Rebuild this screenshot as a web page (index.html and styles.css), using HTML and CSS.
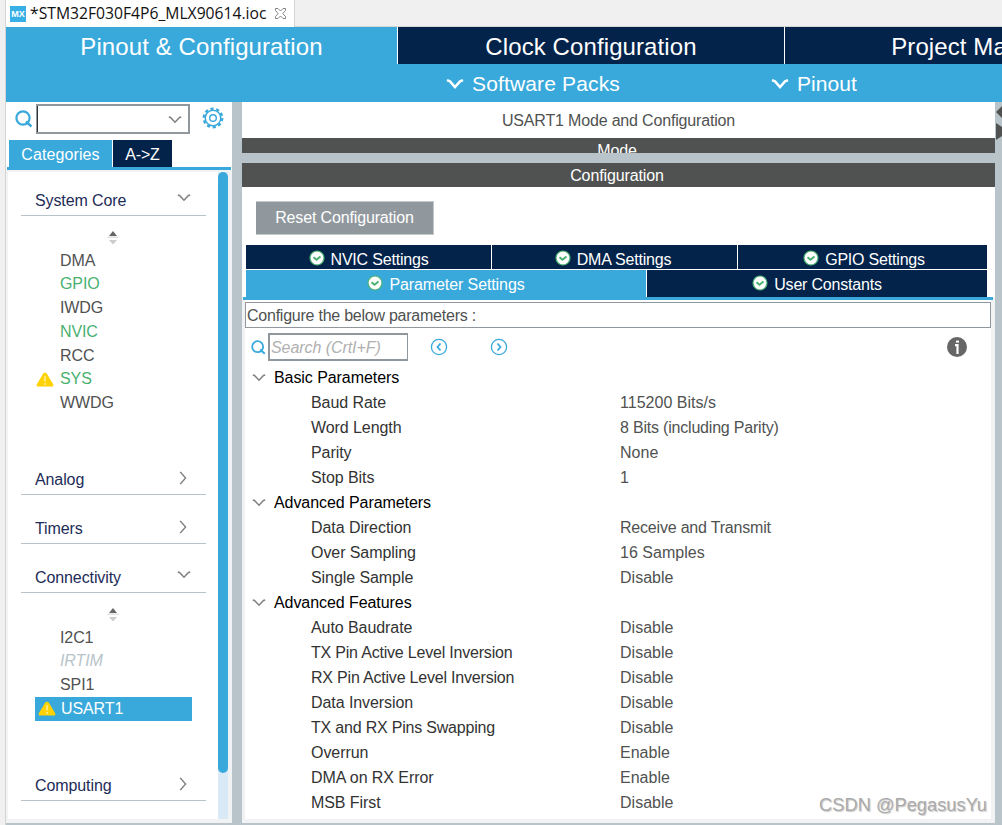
FILE: index.html
```html
<!DOCTYPE html>
<html lang="en">
<head>
    <meta charset="UTF-8">
    <meta name="viewport" content="width=device-width, initial-scale=1.0">
    <title>STM32F030F4P6_MLX90614.ioc</title>
    <link rel="stylesheet" href="styles.css">
</head>
<body>
    <svg class="defs" width="0" height="0">
        <symbol id="down" viewBox="0 0 14 8"><path d="M0.8 1 L2.5 1.5 L7 6.2 L11.5 1.5 L13.2 1" fill="none" stroke="currentColor" stroke-width="1.5"/></symbol>
        <symbol id="right" viewBox="0 0 8 14"><path d="M1 1 L2 1.8 L6.6 7 L2 12.2 L1 13" fill="none" stroke="currentColor" stroke-width="1.4"/></symbol>
        <symbol id="lens" viewBox="0 0 18 18"><circle cx="8" cy="8" r="6.6" fill="none" stroke="currentColor" stroke-width="2.2"/><path d="M11 11.5 L16.5 16.5" stroke="currentColor" stroke-width="2.4"/></symbol>
        <symbol id="warn" viewBox="0 0 18 15"><path d="M9 0.5 L10.8 1.5 L17.3 12.5 L17 14.5 H1 L0.7 12.5 L7.2 1.5 Z" fill="#ffd200"/><path d="M9 4 V9.5 M9 11 V13" stroke="#fff3b8" stroke-width="1.3"/></symbol>
        <symbol id="check" viewBox="0 0 16 16"><circle cx="8" cy="8" r="7" fill="#fff" stroke="#49b170" stroke-width="1.2"/><path d="M4.5 7.2 L7.5 9.8 L11.5 6.4" fill="none" stroke="#49b170" stroke-width="2"/></symbol>
        <symbol id="sort" viewBox="0 0 12 14"><path d="M6 0 L10 5 H2 Z" fill="#666"/><path d="M0.5 6.2 H11.5" stroke="#ddd" stroke-width="1.4"/><path d="M2 9 H10 L6 13.5 Z" fill="#ccc"/></symbol>
    </svg>

    <div class="editor">
        <div class="file-tabs">
            <div class="file-tab">
                <span class="mx">MX</span>
                <span class="file-name">*STM32F030F4P6_MLX90614.ioc</span>
                <svg class="close" viewBox="0 0 11 11"><path d="M0.5 0.5 H3 L5.5 3 L8 0.5 H10.5 V2.5 L7.8 5.5 L10.5 8.5 V10.5 H8 L5.5 8 L3 10.5 H0.5 V8.5 L3.2 5.5 L0.5 2.5 Z" fill="#fff" stroke="#777" stroke-width="0.9"/></svg>
            </div>
        </div>

        <div class="main-tabs">
            <div class="main-tab active">Pinout &amp; Configuration</div>
            <div class="main-tab clock">Clock Configuration</div>
            <div class="main-tab project">Project Manager</div>
        </div>
        <div class="menu">
            <div class="menu-item packs"><svg class="menu-arrow" viewBox="0 0 18 11"><path d="M1 2.2 L4 3.4 L9 9 L14 3.4 L17 2.2" fill="none" stroke="#fff" stroke-width="2.5"/></svg>Software Packs</div>
            <div class="menu-item pinout"><svg class="menu-arrow" viewBox="0 0 18 11"><path d="M1 2.2 L4 3.4 L9 9 L14 3.4 L17 2.2" fill="none" stroke="#fff" stroke-width="2.5"/></svg>Pinout</div>
        </div>

        <div class="workspace">
            <div class="sidebar">
                <div class="side-search">
                    <svg class="lens"><use href="#lens"/></svg>
                    <div class="combo"><svg class="down"><use href="#down"/></svg></div>
                    <svg class="gear" viewBox="0 0 22 22">
                        <circle cx="11" cy="11" r="9.3" fill="none" stroke="#39a9dc" stroke-width="2.2" stroke-dasharray="3.2 2.643"/>
                        <circle cx="11" cy="11" r="7.8" fill="#fff" stroke="#39a9dc" stroke-width="1.5"/>
                        <circle cx="11" cy="11" r="3.3" fill="none" stroke="#39a9dc" stroke-width="1.4"/>
                    </svg>
                </div>
                <div class="side-tabs">
                    <div class="side-tab active">Categories</div>
                    <div class="side-tab az">A-&gt;Z</div>
                </div>
                <div class="side-body">
                    <div class="tree">
                        <div class="group"><span>System Core</span><svg class="down"><use href="#down"/></svg></div>
                        <div class="items core">
                            <svg class="sort"><use href="#sort"/></svg>
                            <div class="item">DMA</div>
                            <div class="item used">GPIO</div>
                            <div class="item">IWDG</div>
                            <div class="item used">NVIC</div>
                            <div class="item">RCC</div>
                            <div class="item used"><svg class="warn"><use href="#warn"/></svg>SYS</div>
                            <div class="item">WWDG</div>
                        </div>
                        <div class="group"><span>Analog</span><svg class="right"><use href="#right"/></svg></div>
                        <div class="group"><span>Timers</span><svg class="right"><use href="#right"/></svg></div>
                        <div class="group"><span>Connectivity</span><svg class="down"><use href="#down"/></svg></div>
                        <div class="items conn">
                            <svg class="sort"><use href="#sort"/></svg>
                            <div class="item">I2C1</div>
                            <div class="item disabled">IRTIM</div>
                            <div class="item">SPI1</div>
                            <div class="item selected"><svg class="warn"><use href="#warn"/></svg>USART1</div>
                        </div>
                        <div class="group"><span>Computing</span><svg class="right"><use href="#right"/></svg></div>
                    </div>
                    <div class="scroll"><div class="thumb"></div></div>
                </div>
            </div>

            <div class="panel">
                <div class="title">USART1 Mode and Configuration</div>
                <div class="bar mode">Mode</div>
                <div class="bar config">Configuration</div>
                <div class="reset-row"><button class="reset">Reset Configuration</button></div>
                <div class="tabs top">
                    <div class="tab"><svg class="check"><use href="#check"/></svg>NVIC Settings</div>
                    <div class="tab dma"><svg class="check"><use href="#check"/></svg>DMA Settings</div>
                    <div class="tab gpio"><svg class="check"><use href="#check"/></svg>GPIO Settings</div>
                </div>
                <div class="tabs bottom">
                    <div class="tab active"><svg class="check"><use href="#check"/></svg>Parameter Settings</div>
                    <div class="tab"><svg class="check"><use href="#check"/></svg>User Constants</div>
                </div>
                <div class="settings">
                    <div class="hint">Configure the below parameters :</div>
                    <div class="tools">
                        <svg class="lens small"><use href="#lens"/></svg>
                        <div class="search">Search (CrtI+F)</div>
                        <svg class="nav prev" viewBox="0 0 18 18"><circle cx="9" cy="9" r="7.6" fill="none" stroke="#39a9dc" stroke-width="1.3"/><path d="M10.5 5.5 L7.5 9 L10.5 12.5" fill="none" stroke="#39a9dc" stroke-width="1.8"/></svg>
                        <svg class="nav next" viewBox="0 0 18 18"><circle cx="9" cy="9" r="7.6" fill="none" stroke="#39a9dc" stroke-width="1.3"/><path d="M7.5 5.5 L10.5 9 L7.5 12.5" fill="none" stroke="#39a9dc" stroke-width="1.8"/></svg>
                        <svg class="info" viewBox="0 0 20 20"><circle cx="10" cy="10" r="10" fill="#666"/><path d="M8 8.2 H10.5 V17" fill="none" stroke="#fff" stroke-width="2.2"/><path d="M9 4.6 H12" stroke="#fff" stroke-width="2"/></svg>
                    </div>
                    <div class="params">
                        <div class="section"><svg class="down"><use href="#down"/></svg>Basic Parameters</div>
                        <div class="param"><span>Baud Rate</span><span>115200 Bits/s</span></div>
                        <div class="param"><span>Word Length</span><span class="tight">8 Bits (including Parity)</span></div>
                        <div class="param"><span>Parity</span><span>None</span></div>
                        <div class="param"><span>Stop Bits</span><span>1</span></div>
                        <div class="section"><svg class="down"><use href="#down"/></svg>Advanced Parameters</div>
                        <div class="param"><span>Data Direction</span><span class="tight">Receive and Transmit</span></div>
                        <div class="param"><span>Over Sampling</span><span>16 Samples</span></div>
                        <div class="param"><span>Single Sample</span><span>Disable</span></div>
                        <div class="section"><svg class="down"><use href="#down"/></svg>Advanced Features</div>
                        <div class="param"><span>Auto Baudrate</span><span>Disable</span></div>
                        <div class="param"><span class="tight">TX Pin Active Level Inversion</span><span>Disable</span></div>
                        <div class="param"><span class="tight">RX Pin Active Level Inversion</span><span>Disable</span></div>
                        <div class="param"><span>Data Inversion</span><span>Disable</span></div>
                        <div class="param"><span class="tight">TX and RX Pins Swapping</span><span>Disable</span></div>
                        <div class="param"><span>Overrun</span><span>Enable</span></div>
                        <div class="param"><span>DMA on RX Error</span><span>Enable</span></div>
                        <div class="param"><span>MSB First</span><span>Disable</span></div>
                    </div>
                </div>
            </div>

            <div class="right-edge">
                <svg viewBox="0 0 7 40"><path d="M1 10 L7 4 V16 Z M1 21 L7 25 V34 L1 38 Z" fill="#505251"/></svg>
            </div>
        </div>
    </div>
    <div class="watermark">CSDN @PegasusYu</div>
</body>
</html>
```
FILE: styles.css
```css
* {
    box-sizing: border-box;
}

body {
    position: relative;
    width: 1002px;
    height: 825px;
    margin: 0;
    overflow: hidden;
    background-color: #f0f0f0;
    font-family: "Liberation Sans", Arial, sans-serif;
    font-size: 16px;
    color: #505251;
    white-space: nowrap;
}

svg {
    display: block;
    flex: none;
}

.defs {
    position: absolute;
}

.editor {
    display: flex;
    flex-direction: column;
    height: 825px;
    margin-left: 5px;
    border-left: 1px solid #d4d4d4;
}

.file-tabs {
    display: flex;
    height: 27px;
    border-bottom: 1px solid #d4d4d4;
}

.file-tab {
    display: flex;
    align-items: center;
    width: 289px;
    height: 27px;
    padding-left: 4px;
    background-color: #fff;
    border-right: 1px solid #d4d4d4;
}

.mx {
    width: 16px;
    height: 16px;
    background-color: #39b0e5;
    color: #fff;
    font-size: 9px;
    font-weight: bold;
    line-height: 16px;
    text-align: center;
}

.file-name {
    width: 249px;
    padding-left: 4px;
    font-family: "Open Sans", "Noto Sans", sans-serif;
    font-size: 15.7px;
    line-height: 22px;
    margin-top: -1px;
    color: #111;
}

.close {
    width: 11px;
    height: 11px;
}

.main-tabs {
    display: flex;
    height: 37px;
    overflow: hidden;
    background-color: #fff;
    font-size: 24px;
    line-height: 40px;
    letter-spacing: 0.1px;
    color: #fff;
    text-align: center;
}

.main-tab {
    flex: none;
    background-color: #03234b;
}

.main-tab.active {
    width: 391px;
    background-color: #39a9dc;
}

.clock {
    width: 386px;
    margin-left: 1px;
}

.project {
    width: 390px;
    margin-left: 1px;
}

.menu {
    display: flex;
    height: 38px;
    padding-top: 1px;
    background-color: #39a9dc;
    color: #fff;
    font-size: 21px;
    letter-spacing: 0.05px;
}

.menu-item {
    display: flex;
    align-items: center;
}

.packs {
    width: 325px;
    margin-left: 440px;
    letter-spacing: 0.15px;
}

.menu-arrow {
    width: 18px;
    height: 11px;
    margin-right: 8px;
}

.workspace {
    display: flex;
    height: 723px;
    background-color: #b8c4ca;
    padding-bottom: 2px;
}

.sidebar {
    width: 226px;
    background-color: #fff;
}

.side-search {
    display: flex;
    height: 38px;
    padding: 2px 0 0 9px;
}

.lens {
    width: 18px;
    height: 18px;
    margin-top: 6px;
    color: #39a9dc;
}

.combo {
    display: flex;
    justify-content: flex-end;
    width: 154px;
    height: 30px;
    margin: 0 12px 0 3px;
    padding: 10px 6px 0 0;
    border: 2px solid #90989e;
    border-left-width: 1px;
    box-shadow: inset 1px 0 #333;
}

.down {
    width: 14px;
    height: 8px;
    color: #808080;
}

.right {
    width: 8px;
    height: 14px;
    margin-right: 4px;
    color: #808080;
}

.gear {
    width: 22px;
    height: 22px;
    margin-top: 3px;
}

.side-tabs {
    display: flex;
    height: 30px;
    margin: 0 1px;
    padding-left: 2px;
    border-bottom: 3px solid #39a9dc;
    line-height: 29px;
    text-align: center;
    color: #fff;
}

.side-tab {
    width: 59px;
    background-color: #03234b;
    letter-spacing: -0.2px;
}

.side-tab.active {
    width: 103px;
    margin-right: 1px;
    background-color: #39a9dc;
    letter-spacing: 0.1px;
}

.side-body {
    display: flex;
    justify-content: space-between;
    height: 653px;
    border: 2px solid #f0f2f4;
    border-right-width: 4px;
    border-bottom-width: 4px;
}

.tree {
    width: 198px;
    padding: 13px 0 0 13px;
    letter-spacing: -0.1px;
}

.group {
    display: flex;
    justify-content: space-between;
    height: 31px;
    margin-bottom: 18px;
    padding: 0 15px 0 14px;
    border-bottom: 1px solid #b8c4ca;
    line-height: 32px;
    color: #1d2c57;
}

.group .down {
    margin-top: 9px;
}

.group .right {
    margin-top: 7px;
}

.items {
    padding-left: 14px;
    line-height: 23.8px;
}

.core {
    height: 233px;
}

.conn {
    height: 162px;
}

.sort {
    width: 12px;
    height: 14px;
    margin: -3px 0 3.5px 72px;
}

.conn .sort {
    margin-top: -3px;
}

.item {
    display: flex;
    align-items: center;
    height: 23.8px;
    padding-left: 25px;
}

.used {
    color: #49b170;
}

.disabled {
    color: #b8c4ca;
    font-style: italic;
}

.warn {
    width: 18px;
    height: 15px;
    margin: 0 6px 0 -24px;
}

.selected {
    width: 157px;
    padding-left: 26px;
    background-color: #39a9dc;
    color: #fff;
}

.selected .warn {
    margin-left: -23px;
    margin-right: 5px;
}

.scroll {
    width: 10px;
    background-color: #dae9f6;
}

.thumb {
    height: 601px;
    border-radius: 5px;
    background-color: #39a9dc;
}

.panel {
    width: 753px;
    margin-left: 10px;
    background-color: #fff;
    letter-spacing: -0.07px;
}

.title {
    height: 36px;
    line-height: 37px;
    text-align: center;
    letter-spacing: -0.17px;
}

.bar {
    height: 24px;
    padding-right: 3px;
    background-color: #505251;
    color: #fff;
    line-height: 25px;
    text-align: center;
    letter-spacing: -0.12px;
}

.mode {
    height: 15px;
    overflow: hidden;
}

.config {
    margin-top: 10px;
    box-shadow: 0 -10px #b8c4ca;
}

.reset-row {
    height: 58px;
    padding: 14px 14px 0;
}

.reset {
    width: 178px;
    height: 34px;
    padding: 0;
    border: 1px solid #c4c9cc;
    border-left: 0;
    background-color: #90989e;
    color: #fff;
    font-family: inherit;
    font-size: 16px;
    letter-spacing: -0.15px;
}

.tabs {
    display: grid;
    gap: 1px;
    padding: 0 8px 0 4px;
    color: #fff;
}

.top {
    grid-template: 24px / 245px 245px 249px;
    height: 25px;
}

.bottom {
    grid-template: 27px / 400px 340px;
    height: 27px;
}

.tab {
    display: flex;
    justify-content: center;
    overflow: hidden;
    background-color: #03234b;
    line-height: 29px;
    letter-spacing: -0.2px;
}

.tab.active {
    background-color: #39a9dc;
    letter-spacing: -0.1px;
}

.dma {
    padding-right: 3px;
}

.gpio {
    padding-left: 3px;
}

.check {
    width: 16px;
    height: 16px;
    margin: 5px 6px 0 0;
}

.settings {
    height: 526px;
    border: 3px solid #f0f2f4;
    border-width: 0 4px 4px 3px;
}

/* blue strip under the tabs */
.settings::before {
    content: "";
    display: block;
    height: 3px;
    margin: 0 -2px 2px;
    background-color: #39a9dc;
}

.hint {
    height: 26px;
    padding-left: 1px;
    border: 1px solid #90989e;
    line-height: 25px;
    letter-spacing: -0.24px;
}

.tools {
    display: flex;
    height: 37px;
    padding: 5px 24px 0 6px;
}

.lens.small {
    width: 15px;
    height: 15px;
    margin-top: 7px;
}

.search {
    width: 140px;
    height: 28px;
    margin-left: 2px;
    padding-left: 1px;
    border: 2px solid #90989e;
    border-right-width: 1px;
    line-height: 26px;
    font-style: italic;
    color: #b0b0b0;
}

.nav {
    width: 18px;
    height: 18px;
    margin: 5px 0 0 22px;
}

.nav.next {
    margin-left: 42px;
}

.info {
    width: 20px;
    height: 20px;
    margin: 4px 0 0 auto;
}

.section,
.param {
    display: flex;
    align-items: center;
    height: 25px;
}

.section {
    padding-left: 7px;
    color: #000;
}

.section .down {
    margin-right: 8px;
}

.param {
    padding-left: 66px;
}

.param span:first-child {
    width: 309px;
    color: #333;
}

.param span:last-child {
    letter-spacing: 0.02px;
}

.param .tight,
.param span.tight:last-child {
    letter-spacing: -0.2px;
}

.right-edge {
    width: 7px;
}

.right-edge svg {
    width: 7px;
    height: 40px;
}

.watermark {
    position: absolute;
    right: 15px;
    bottom: 9px;
    font-size: 18.3px;
    color: #aaa;
    text-shadow: 1px 1px 1px #ccc;
}
```
